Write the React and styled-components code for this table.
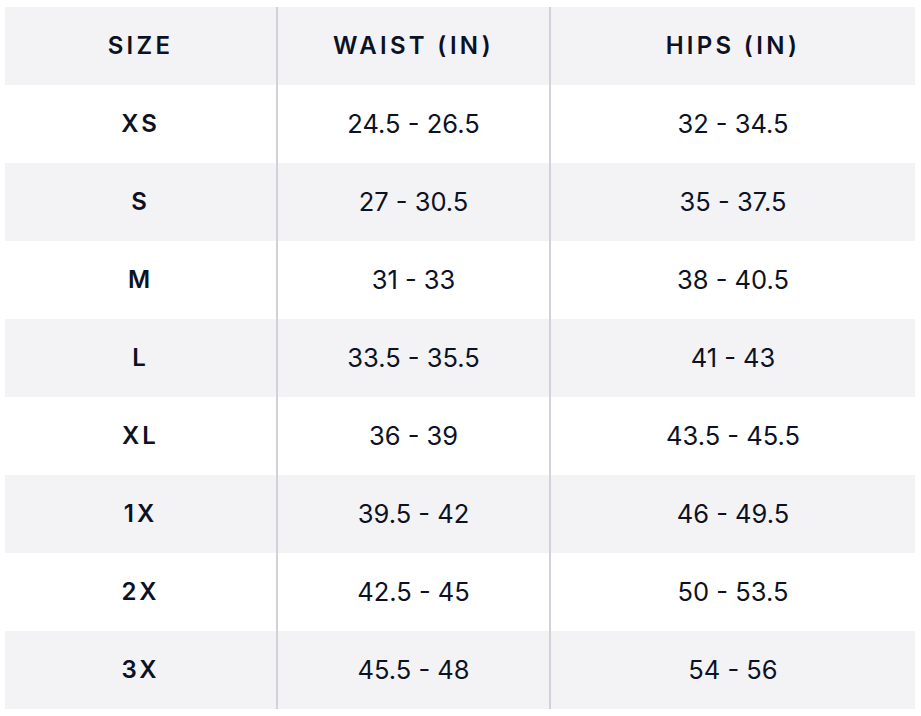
import React from "react";
import styled, { createGlobalStyle } from "styled-components";

const GlobalStyle = createGlobalStyle`
  body {
    margin: 0;
    background: #ffffff;
    font-family: Inter, "Noto Sans", "Liberation Sans", sans-serif;
  }
`;

const Page = styled.div`
  padding: 7px 6px 0 5px;
`;

const Table = styled.div`
  width: 910px;
  color: #0c1124;
`;

const Row = styled.div`
  display: grid;
  grid-template-columns: 271px 273px 366px;
  height: 78px;
  background: ${p => (p.$striped ? "#f3f3f6" : "#ffffff")};
`;

const Cell = styled.div`
  display: flex;
  align-items: center;
  justify-content: center;
  box-sizing: border-box;
  padding-bottom: 2px;
  border-left: ${p => (p.$divider ? "2px solid #cfd1db" : "none")};
`;

const HeadCell = styled(Cell)`
  font-size: 24px;
  font-weight: 600;
  letter-spacing: 3.3px;
  padding-bottom: 1px;
`;

const SizeCell = styled(Cell)`
  font-size: 24px;
  font-weight: 600;
  letter-spacing: 3px;
`;

const ValueCell = styled(Cell)`
  font-size: 25.5px;
  font-weight: 400;
`;

const rows = [
  ["XS", "24.5 - 26.5", "32 - 34.5"],
  ["S", "27 - 30.5", "35 - 37.5"],
  ["M", "31 - 33", "38 - 40.5"],
  ["L", "33.5 - 35.5", "41 - 43"],
  ["XL", "36 - 39", "43.5 - 45.5"],
  ["1X", "39.5 - 42", "46 - 49.5"],
  ["2X", "42.5 - 45", "50 - 53.5"],
  ["3X", "45.5 - 48", "54 - 56"],
];

export default function App() {
  return (
    <Page>
      <GlobalStyle />
      <Table>
        <Row $striped>
          <HeadCell>SIZE</HeadCell>
          <HeadCell $divider>WAIST (IN)</HeadCell>
          <HeadCell $divider>HIPS (IN)</HeadCell>
        </Row>
        {rows.map((r, i) => (
          <Row key={r[0]} $striped={i % 2 === 1}>
            <SizeCell>{r[0]}</SizeCell>
            <ValueCell $divider>{r[1]}</ValueCell>
            <ValueCell $divider>{r[2]}</ValueCell>
          </Row>
        ))}
      </Table>
    </Page>
  );
}
